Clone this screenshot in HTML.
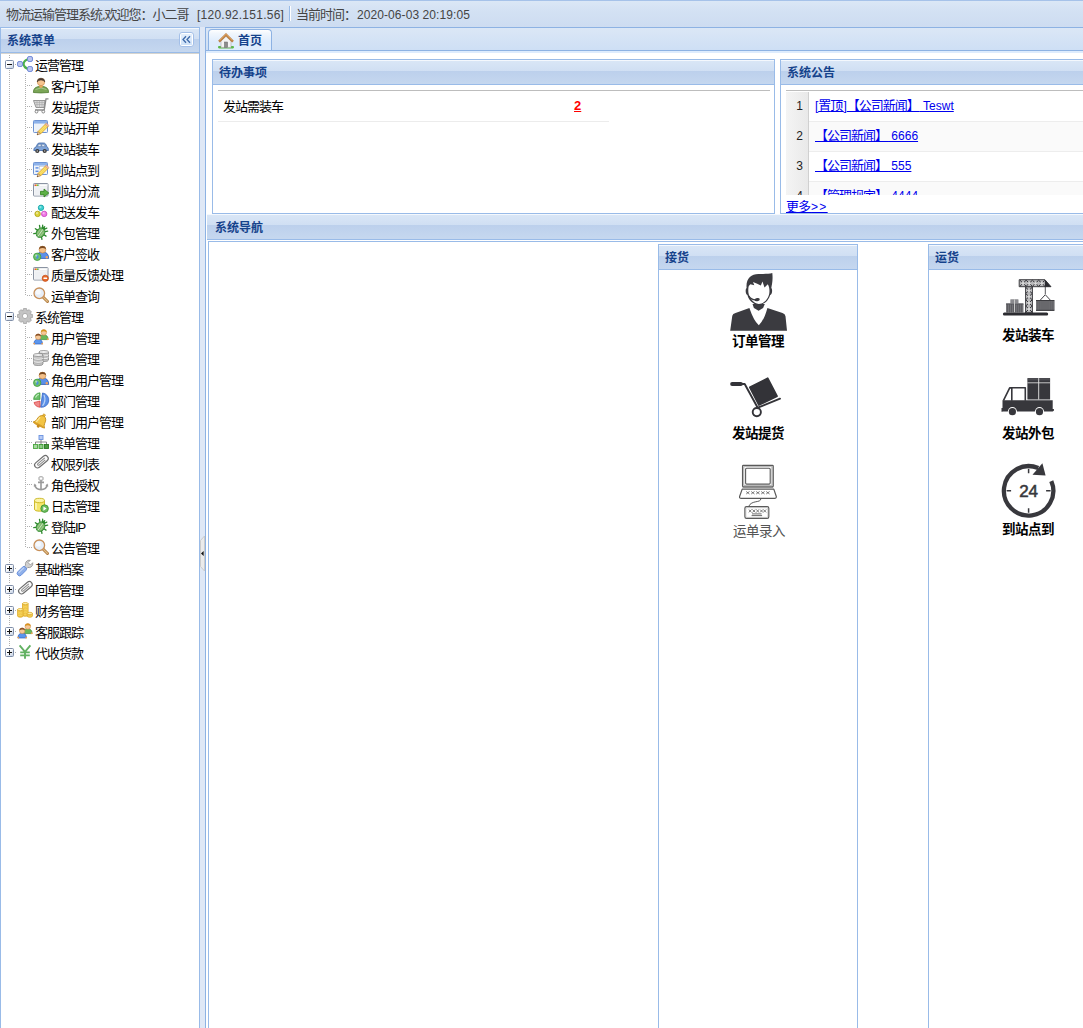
<!DOCTYPE html>
<html lang="zh-CN">
<head>
<meta charset="utf-8">
<title>物流运输管理系统</title>
<style>
*{box-sizing:border-box;margin:0;padding:0}
html,body{width:1083px;height:1028px;overflow:hidden;background:#dfe8f6;font-family:"Liberation Sans","Noto Sans CJK SC",sans-serif;font-size:12px;color:#000}
i{font-style:normal;display:block}
.abs{position:absolute}
.c{font-size:13px;letter-spacing:-1px}
.c0{font-size:13px}
#top{position:absolute;left:0;top:0;width:1083px;height:27px;background:linear-gradient(#dbe7f6 0,#d3e1f3 40%,#cddcf1 100%);border-top:1px solid #a6c2e9}
#top span{position:absolute;top:6px;white-space:nowrap;color:#444;line-height:15px}
.hd{position:absolute;border:1px solid #99bbe8;height:26px;background:linear-gradient(#f4f8fd 0,#f4f8fd 1px,#d9e6f6 1px,#d0dff3 11px,#bcd0ec 11px,#c5d7ef 24px);color:#15428b;font-weight:bold;font-size:12px;line-height:15px;padding:6px 0 0 6px;white-space:nowrap;overflow:hidden}
.bd{position:absolute;border:1px solid #99bbe8;border-top:0;background:#fff;overflow:hidden}
#tree{position:absolute;left:1px;top:53px;width:198px;height:975px;background:#fff;overflow:hidden}
.row{position:absolute;left:0;height:21px;width:198px;white-space:nowrap}
.row .t{position:absolute;top:4px;font-size:13px;letter-spacing:-1px;line-height:15px;color:#000}
.ic{position:absolute;width:16px;height:16px;top:2px;overflow:visible}
.pm{position:absolute;left:4px;top:6px;width:9px;height:9px;border:1px solid #7f8ea8;border-radius:1.5px;background:linear-gradient(135deg,#fff 35%,#c3cfe2)}
.pm:before{content:"";position:absolute;left:1px;top:3px;width:5px;height:1px;background:#111}
.pm.plus:after{content:"";position:absolute;left:3px;top:1px;width:1px;height:5px;background:#111}
.vl{position:absolute;width:1px;background-image:linear-gradient(#b0b0b0 50%,transparent 50%);background-size:1px 2px}
.hl{position:absolute;height:1px;background-image:linear-gradient(90deg,#b0b0b0 50%,transparent 50%);background-size:2px 1px}
#tool{position:absolute;left:179px;top:32px;width:15px;height:15px;border:1px solid #a3bfe8;border-radius:3px;background:#fff}
#tool i{position:absolute;left:1px;top:1px;width:11px;height:11px;background:linear-gradient(#e4effc,#cfe2f8)}
#tool svg{position:absolute;left:1px;top:1px;width:11px;height:11px}
a{color:#0000ee;text-decoration:underline}
.lbl{position:absolute;left:0;width:198px;text-align:center;font-family:"Liberation Sans","Noto Sans CJK SC",sans-serif;font-weight:bold;font-size:13.5px;letter-spacing:-0.5px;line-height:16px;color:#000;white-space:nowrap}
.big{position:absolute}
.grow{position:absolute;left:0;width:320px;height:30px;border-bottom:1px solid #ededed}
.grow b{position:absolute;left:0;top:0;width:23px;height:30px;background:linear-gradient(90deg,#f4f4f4,#e9e9e9);border-right:1px solid #d0d0d0;font-weight:normal;text-align:right;padding:7px 5px 0 0;line-height:15px;color:#222}
.grow a{position:absolute;left:29px;top:6px;line-height:15px;white-space:nowrap}
</style>
</head>
<body>
<div id="top">
<span class="c" style="left:6px">物流运输管理系统,欢迎您：小二哥</span>
<span style="left:197px;top:7px;letter-spacing:0.25px">[120.92.151.56]</span>
<i class="abs" style="left:289px;top:5px;width:1px;height:15px;background:#98bbe7"></i><i class="abs" style="left:290px;top:5px;width:1px;height:15px;background:#fff"></i>
<span class="c" style="left:296px">当前时间：</span>
<span style="left:357px;top:7px;letter-spacing:0.08px">2020-06-03 20:19:05</span>
</div>

<!-- left panel -->
<div class="hd" style="left:0;top:27px;width:200px">系统菜单</div>
<div id="tool"><i></i><svg viewBox="0 0 11 11"><path d="M5 2.2 L2 5.5 L5 8.8 M9 2.2 L6 5.5 L9 8.8" fill="none" stroke="#3e6aaa" stroke-width="1.3"/></svg></div>
<div class="abs" style="left:0;top:53px;width:1px;height:975px;background:#99bbe8"></div>
<div class="abs" style="left:199px;top:53px;width:1px;height:975px;background:#99bbe8"></div>
<div class="abs" style="left:1px;top:53px;width:198px;height:1px;background:#d6d4ce;z-index:2"></div>
<div id="tree">
<div class="row" style="top:1px"><i class="pm"></i><i class="hl" style="left:14px;top:10px;width:2px"></i><svg class="ic" style="left:16px" viewBox="0 0 16 16"><path d="M12 3 Q7 4 6.5 8 Q7 12 12 13" stroke="#4db04d" stroke-width="2.2" fill="none"/><path d="M3 8 H7" stroke="#4db04d" stroke-width="2"/><rect x="0.5" y="5.5" width="5" height="5" rx="1.6" fill="#b9c5ee" stroke="#7088d8"/><rect x="10.5" y="0.5" width="5" height="5" rx="1.6" fill="#b9c5ee" stroke="#7088d8"/><rect x="10.5" y="10.5" width="5" height="5" rx="1.6" fill="#b9c5ee" stroke="#7088d8"/></svg><span class="t" style="left:34px">运营管理</span></div>
<div class="row" style="top:22px"><i class="hl" style="left:26px;top:10px;width:6px"></i><svg class="ic" style="left:32px" viewBox="0 0 16 16"><path d="M0.4 15.5 Q0.2 9.4 8 9.3 Q15.8 9.4 15.6 15.5 Q8 16.4 0.4 15.5Z" fill="#7aa556" stroke="#4c7a2e" stroke-width="0.8"/><path d="M2.5 12.5 Q8 9.5 13.5 12.5" fill="none" stroke="#a8c890" stroke-width="1"/><path d="M6.3 8 H9.7 V10.2 Q8 11.4 6.3 10.2Z" fill="#e8a860"/><circle cx="8" cy="5" r="3.7" fill="#f6c592" stroke="#c8843c" stroke-width="0.6"/><path d="M4.2 5 A3.8 3.8 0 0 1 11.8 5 Q10.5 2.8 8 3 Q5.5 2.8 4.2 5Z" fill="#4a3a30" stroke="#4a3a30" stroke-width="0.6"/></svg><span class="t" style="left:50px">客户订单</span></div>
<div class="row" style="top:43px"><i class="hl" style="left:26px;top:10px;width:6px"></i><svg class="ic" style="left:32px" viewBox="0 0 16 16"><path d="M0.5 2.5 H12 L11 9.5 H3 Z" fill="#d9d9d9" stroke="#8c8c8c" stroke-width="0.9"/><path d="M2 4.5H11.5M2.5 6.5H11.3M4 2.5V9.5M6.5 2.5V9.5M9 2.5V9.5" stroke="#a8a8a8" stroke-width="0.6"/><path d="M15.5 0.8 H13 L11.2 12 H2" fill="none" stroke="#8a8a8a" stroke-width="1.3"/><circle cx="3.5" cy="13.6" r="1.4" fill="#fff" stroke="#7a7a7a" stroke-width="0.9"/><circle cx="10.3" cy="13.6" r="1.4" fill="#fff" stroke="#7a7a7a" stroke-width="0.9"/></svg><span class="t" style="left:50px">发站提货</span></div>
<div class="row" style="top:64px"><i class="hl" style="left:26px;top:10px;width:6px"></i><svg class="ic" style="left:32px" viewBox="0 0 16 16"><rect x="0.5" y="1.5" width="14" height="12" rx="0.8" fill="#f4f8fc" stroke="#6d93d3"/><rect x="1" y="2" width="13" height="2.6" fill="#8db2ea"/><rect x="1.5" y="5" width="12" height="8" fill="#e8eef6" opacity="0.6"/><g transform="translate(4.5,15.5) rotate(-45)"><rect x="2.5" y="-1.8" width="11" height="3.6" fill="#f7d44c" stroke="#d49a2a" stroke-width="0.6"/><path d="M4 -0.6H13M4 0.6H13" stroke="#fbe98a" stroke-width="0.6"/><rect x="12.5" y="-1.8" width="2" height="3.6" rx="0.8" fill="#f0b9a0" stroke="#c98a6a" stroke-width="0.5"/><path d="M2.5 -1.8 L-0.5 0 L2.5 1.8Z" fill="#e8c9a0" stroke="#a0703a" stroke-width="0.5"/><path d="M0.6 -0.7L-0.6 0L0.6 0.7Z" fill="#5a3a1a"/></g></svg><span class="t" style="left:50px">发站开单</span></div>
<div class="row" style="top:85px"><i class="hl" style="left:26px;top:10px;width:6px"></i><svg class="ic" style="left:32px" viewBox="0 0 16 16"><path d="M0.8 10.5 Q0.5 7.5 3 7 L4.5 4 Q5 3 6.5 3 H10.5 Q12 3 12.6 4 L14 6.8 Q15.6 7.4 15.4 10.5 Z" fill="#7ea3d8" stroke="#3f68a8" stroke-width="0.8"/><path d="M4.6 6.6 L5.6 4.3 H8 V6.6Z M8.8 4.3 H11 L12.2 6.6 H8.8Z" fill="#dbe8f7" stroke="#49628a" stroke-width="0.4"/><circle cx="4.3" cy="11" r="2.1" fill="#3a3a3a"/><circle cx="4.3" cy="11" r="0.8" fill="#bbb"/><circle cx="11.7" cy="11" r="2.1" fill="#3a3a3a"/><circle cx="11.7" cy="11" r="0.8" fill="#bbb"/></svg><span class="t" style="left:50px">发站装车</span></div>
<div class="row" style="top:106px"><i class="hl" style="left:26px;top:10px;width:6px"></i><svg class="ic" style="left:32px" viewBox="0 0 16 16"><rect x="0.5" y="1.5" width="14" height="12" rx="0.8" fill="#f4f8fc" stroke="#6d93d3"/><rect x="1" y="2" width="13" height="2.6" fill="#8db2ea"/><rect x="1.5" y="5" width="12" height="8" fill="#e8eef6" opacity="0.6"/><rect x="2.5" y="6.2" width="3" height="1.4" fill="#5b8be0"/><rect x="2.5" y="9.6" width="3" height="1.4" fill="#5b8be0"/><rect x="6.5" y="5.7" width="6.5" height="2.4" fill="#fff" stroke="#b0b8c4" stroke-width="0.5"/><g transform="translate(4.5,15.5) rotate(-45)"><rect x="2.5" y="-1.8" width="11" height="3.6" fill="#f7d44c" stroke="#d49a2a" stroke-width="0.6"/><path d="M4 -0.6H13M4 0.6H13" stroke="#fbe98a" stroke-width="0.6"/><rect x="12.5" y="-1.8" width="2" height="3.6" rx="0.8" fill="#f0b9a0" stroke="#c98a6a" stroke-width="0.5"/><path d="M2.5 -1.8 L-0.5 0 L2.5 1.8Z" fill="#e8c9a0" stroke="#a0703a" stroke-width="0.5"/><path d="M0.6 -0.7L-0.6 0L0.6 0.7Z" fill="#5a3a1a"/></g></svg><span class="t" style="left:50px">到站点到</span></div>
<div class="row" style="top:127px"><i class="hl" style="left:26px;top:10px;width:6px"></i><svg class="ic" style="left:32px" viewBox="0 0 16 16"><rect x="0.5" y="1.5" width="14.5" height="12.5" rx="0.8" fill="#fbfbfb" stroke="#8a93a2"/><rect x="1" y="2" width="13.5" height="2.6" fill="#e3e6ea"/><rect x="1.6" y="2.5" width="1.3" height="1.5" fill="#e0442e"/><rect x="2.9" y="2.5" width="1.3" height="1.5" fill="#f0b020"/><rect x="4.2" y="2.5" width="1.3" height="1.5" fill="#4cae3a"/><rect x="6.5" y="2.6" width="7.3" height="1.3" fill="#fff"/><rect x="1.5" y="5.2" width="12.5" height="8.2" fill="#eef0f3"/><path d="M7.5 9.3 H11 V7 L15.8 11 L11 15 V12.7 H7.5Z" fill="#5eb046" stroke="#2f7d1c" stroke-width="0.8" stroke-linejoin="round"/></svg><span class="t" style="left:50px">到站分流</span></div>
<div class="row" style="top:148px"><i class="hl" style="left:26px;top:10px;width:6px"></i><svg class="ic" style="left:32px" viewBox="0 0 16 16"><circle cx="8" cy="4.8" r="2.7" fill="#3fd0d0" stroke="#1aa6a8" stroke-width="0.9"/><circle cx="7.4" cy="4.1" r="1.1" fill="#fff" opacity="0.45"/><circle cx="4.6" cy="10.9" r="2.7" fill="#dcd33a" stroke="#b0a61a" stroke-width="0.9"/><circle cx="3.9999999999999996" cy="10.200000000000001" r="1.1" fill="#fff" opacity="0.45"/><circle cx="11.2" cy="10.9" r="2.7" fill="#f07ae6" stroke="#cc48c2" stroke-width="0.9"/><circle cx="10.6" cy="10.200000000000001" r="1.1" fill="#fff" opacity="0.45"/></svg><span class="t" style="left:50px">配送发车</span></div>
<div class="row" style="top:169px"><i class="hl" style="left:26px;top:10px;width:6px"></i><svg class="ic" style="left:32px" viewBox="0 0 16 16"><g transform="rotate(35 8 8)"><path d="M8 1.5V4M3 3.5L5.5 6M13 3.5L10.5 6M1.5 8.5H4.5M14.5 8.5H11.5M3 13.5L5.5 11M13 13.5L10.5 11M5.5 1.5L6.8 3.8M10.5 1.5L9.2 3.8" stroke="#2e8a2e" stroke-width="1.3" stroke-linecap="round"/><ellipse cx="8" cy="8.8" rx="4" ry="5" fill="#7cb86a" stroke="#2e8a2e" stroke-width="1"/><ellipse cx="8" cy="3.6" rx="2" ry="1.5" fill="#2e8a2e"/><path d="M8 4.6V13.6" stroke="#d8ecd0" stroke-width="0.8"/><path d="M6 6.5V11.5M10 6.5V11.5" stroke="#a8d09a" stroke-width="0.7"/></g></svg><span class="t" style="left:50px">外包管理</span></div>
<div class="row" style="top:190px"><i class="hl" style="left:26px;top:10px;width:6px"></i><svg class="ic" style="left:32px" viewBox="0 0 16 16"><path d="M3.3 13.44 Q3.3 6.9799999999999995 9.5 6.9799999999999995 Q15.7 6.9799999999999995 15.7 13.44 Z" fill="#5b8fe8" stroke="#2e5cb8" stroke-width="0.8"/><circle cx="9.5" cy="4.6" r="3.4" fill="#f3c08a" stroke="#c8843c" stroke-width="0.6"/><path d="M6.1 4.3 A3.4 3.4 0 0 1 12.9 4.3 Q9.5 1.5399999999999996 6.1 4.3Z" fill="#7a4a22"/><circle cx="13.8" cy="12.2" r="1.2" fill="#f3a25a"/><circle cx="4.2" cy="11.8" r="3.7" fill="#6fc06a" stroke="#3c9a3c" stroke-width="0.8"/><path d="M3 9.5 Q6 10 5.5 12.5 Q4.5 14.5 3 13.5 Q4 12 3 9.5Z" fill="#4a8ee0"/><circle cx="3.2" cy="10.6" r="1.1" fill="#cfeccc" opacity="0.7"/></svg><span class="t" style="left:50px">客户签收</span></div>
<div class="row" style="top:211px"><i class="hl" style="left:26px;top:10px;width:6px"></i><svg class="ic" style="left:32px" viewBox="0 0 16 16"><rect x="0.5" y="1.5" width="14.5" height="12.5" rx="0.8" fill="#fbfbfb" stroke="#8a93a2"/><rect x="1" y="2" width="13.5" height="2.6" fill="#e3e6ea"/><rect x="1.6" y="2.5" width="1.3" height="1.5" fill="#e0442e"/><rect x="2.9" y="2.5" width="1.3" height="1.5" fill="#f0b020"/><rect x="4.2" y="2.5" width="1.3" height="1.5" fill="#4cae3a"/><rect x="6.5" y="2.6" width="7.3" height="1.3" fill="#fff"/><rect x="1.5" y="5.2" width="12.5" height="8.2" fill="#eef0f3"/><circle cx="12.3" cy="12.3" r="3.1" fill="#e8692a" stroke="#c24a12" stroke-width="0.7"/><rect x="10.4" y="11.6" width="3.8" height="1.4" rx="0.4" fill="#fff"/></svg><span class="t" style="left:50px">质量反馈处理</span></div>
<div class="row" style="top:232px"><i class="hl" style="left:26px;top:10px;width:6px"></i><svg class="ic" style="left:32px" viewBox="0 0 16 16"><path d="M10 10 L14.5 14.5" stroke="#b07a3e" stroke-width="3" stroke-linecap="round"/><path d="M10.4 10.4 L14.3 14.3" stroke="#e3c08a" stroke-width="1.3" stroke-linecap="round"/><circle cx="6.3" cy="6.3" r="5.3" fill="#e6eef9" stroke="#c8905a" stroke-width="1.3"/><circle cx="5.3" cy="5" r="2.6" fill="#fff" opacity="0.7"/></svg><span class="t" style="left:50px">运单查询</span></div>
<i class="vl" style="left:24px;top:21px;height:222px"></i>
<div class="row" style="top:253px"><i class="pm"></i><i class="hl" style="left:14px;top:10px;width:2px"></i><svg class="ic" style="left:16px" viewBox="0 0 16 16"><path d="M6.49 0.55 L9.51 0.55 L10.13 2.82 L10.16 2.83 L12.20 1.67 L14.33 3.80 L13.17 5.84 L13.18 5.87 L15.45 6.49 L15.45 9.51 L13.18 10.13 L13.17 10.16 L14.33 12.20 L12.20 14.33 L10.16 13.17 L10.13 13.18 L9.51 15.45 L6.49 15.45 L5.87 13.18 L5.84 13.17 L3.80 14.33 L1.67 12.20 L2.83 10.16 L2.82 10.13 L0.55 9.51 L0.55 6.49 L2.82 5.87 L2.83 5.84 L1.67 3.80 L3.80 1.67 L5.84 2.83 L5.87 2.82Z" fill="#c4c4c4" stroke="#9a9a9a" stroke-width="0.7" stroke-linejoin="round"/><circle cx="8" cy="8" r="2.6" fill="#fff" stroke="#a0a0a0" stroke-width="0.8"/></svg><span class="t" style="left:34px">系统管理</span></div>
<div class="row" style="top:274px"><i class="hl" style="left:26px;top:10px;width:6px"></i><svg class="ic" style="left:32px" viewBox="0 0 16 16"><path d="M6.6000000000000005 10.6 Q6.4 6.0 10.8 5.8 Q15.200000000000001 6.0 15.0 10.6Z" fill="#6ab85a" stroke="#3c8a34" stroke-width="0.7"/><circle cx="6.800000000000001" cy="10.2" r="0.9" fill="#f0a050"/><circle cx="14.8" cy="10.2" r="0.9" fill="#f0a050"/><circle cx="10.8" cy="3.4" r="2.8" fill="#f6c898" stroke="#c8843c" stroke-width="0.5"/><path d="M8.0 3.1999999999999997 A2.8 2.8 0 0 1 13.600000000000001 3.1999999999999997 Q10.8 1.1999999999999997 8.0 3.1999999999999997Z" fill="#d8941e"/><path d="M1.0 15.0 Q0.7999999999999998 10.4 5.2 10.2 Q9.600000000000001 10.4 9.4 15.0Z" fill="#5b96ee" stroke="#2e62c0" stroke-width="0.7"/><circle cx="1.2000000000000002" cy="14.6" r="0.9" fill="#f0a050"/><circle cx="9.2" cy="14.6" r="0.9" fill="#f0a050"/><circle cx="5.2" cy="7.8" r="2.8" fill="#f6c898" stroke="#c8843c" stroke-width="0.5"/><path d="M2.4000000000000004 7.6 A2.8 2.8 0 0 1 8.0 7.6 Q5.2 5.6 2.4000000000000004 7.6Z" fill="#8a5228"/></svg><span class="t" style="left:50px">用户管理</span></div>
<div class="row" style="top:295px"><i class="hl" style="left:26px;top:10px;width:6px"></i><svg class="ic" style="left:32px" viewBox="0 0 16 16"><path d="M6 2.0 V10.0 A4.75 1.5 0 0 0 15.5 10.0 V2.0Z" fill="#c8c8c8" stroke="#7c7c7c" stroke-width="0.7"/><path d="M6 4.666666666666666 A4.75 1.5 0 0 0 15.5 4.666666666666666" fill="none" stroke="#fff" stroke-width="0.9"/><path d="M6 5.366666666666666 A4.75 1.5 0 0 0 15.5 5.366666666666666" fill="none" stroke="#888" stroke-width="0.5"/><path d="M6 7.333333333333333 A4.75 1.5 0 0 0 15.5 7.333333333333333" fill="none" stroke="#fff" stroke-width="0.9"/><path d="M6 8.033333333333333 A4.75 1.5 0 0 0 15.5 8.033333333333333" fill="none" stroke="#888" stroke-width="0.5"/><ellipse cx="10.75" cy="2.0" rx="4.75" ry="1.5" fill="#f0f0f0" stroke="#7c7c7c" stroke-width="0.7"/><path d="M0.5 5.0 V14.0 A4.75 1.5 0 0 0 10.0 14.0 V5.0Z" fill="#c8c8c8" stroke="#7c7c7c" stroke-width="0.7"/><path d="M0.5 8.0 A4.75 1.5 0 0 0 10.0 8.0" fill="none" stroke="#fff" stroke-width="0.9"/><path d="M0.5 8.7 A4.75 1.5 0 0 0 10.0 8.7" fill="none" stroke="#888" stroke-width="0.5"/><path d="M0.5 11.0 A4.75 1.5 0 0 0 10.0 11.0" fill="none" stroke="#fff" stroke-width="0.9"/><path d="M0.5 11.7 A4.75 1.5 0 0 0 10.0 11.7" fill="none" stroke="#888" stroke-width="0.5"/><ellipse cx="5.25" cy="5.0" rx="4.75" ry="1.5" fill="#f0f0f0" stroke="#7c7c7c" stroke-width="0.7"/></svg><span class="t" style="left:50px">角色管理</span></div>
<div class="row" style="top:316px"><i class="hl" style="left:26px;top:10px;width:6px"></i><svg class="ic" style="left:32px" viewBox="0 0 16 16"><path d="M3.3 13.44 Q3.3 6.9799999999999995 9.5 6.9799999999999995 Q15.7 6.9799999999999995 15.7 13.44 Z" fill="#5b8fe8" stroke="#2e5cb8" stroke-width="0.8"/><circle cx="9.5" cy="4.6" r="3.4" fill="#f3c08a" stroke="#c8843c" stroke-width="0.6"/><path d="M6.1 4.3 A3.4 3.4 0 0 1 12.9 4.3 Q9.5 1.5399999999999996 6.1 4.3Z" fill="#7a4a22"/><circle cx="13.8" cy="12.2" r="1.2" fill="#f3a25a"/><circle cx="4.2" cy="11.8" r="3.7" fill="#6fc06a" stroke="#3c9a3c" stroke-width="0.8"/><path d="M3 9.5 Q6 10 5.5 12.5 Q4.5 14.5 3 13.5 Q4 12 3 9.5Z" fill="#4a8ee0"/><circle cx="3.2" cy="10.6" r="1.1" fill="#cfeccc" opacity="0.7"/></svg><span class="t" style="left:50px">角色用户管理</span></div>
<div class="row" style="top:337px"><i class="hl" style="left:26px;top:10px;width:6px"></i><svg class="ic" style="left:32px" viewBox="0 0 16 16"><path d="M8.6 8 L8.6 0.8 A7.2 7.2 0 0 1 8.6 15.2Z" transform="rotate(8 8 8)" fill="#5b8fe6" stroke="#2e5fc0" stroke-width="0.7"/><path d="M10.3 2.5 Q13.5 8 10.3 13.5" transform="rotate(8 8 8)" fill="none" stroke="#b8d0f6" stroke-width="1.2"/><path d="M7 7.4 L0.6 7.4 A6.6 6.6 0 0 1 7 0.8Z" fill="#6cc06a" stroke="#3a9a3a" stroke-width="0.7"/><path d="M2.5 5.5 Q3.5 2.8 6 2.2" fill="none" stroke="#c8ecc4" stroke-width="1.1"/><path d="M7 9 L7 15.2 A6.6 6.6 0 0 1 1 10.5Z" fill="#f08a8a" stroke="#d83a3a" stroke-width="0.7"/></svg><span class="t" style="left:50px">部门管理</span></div>
<div class="row" style="top:358px"><i class="hl" style="left:26px;top:10px;width:6px"></i><svg class="ic" style="left:32px" viewBox="0 0 16 16"><g transform="rotate(28 8 8)"><circle cx="8" cy="1.6" r="1.3" fill="#f0c040" stroke="#c08a1a" stroke-width="0.6"/><path d="M8 2.2 Q3.6 3 3.6 8.5 Q3.4 11 1.6 12.6 H14.4 Q12.6 11 12.4 8.5 Q12.4 3 8 2.2Z" fill="#f3c444" stroke="#c08a1a" stroke-width="0.8"/><path d="M5.4 5 Q5 8 4.2 11" stroke="#fbe7a0" stroke-width="1.2" fill="none"/><ellipse cx="8" cy="12.6" rx="6.4" ry="1.2" fill="#d9a02a"/><circle cx="8" cy="13.8" r="1.5" fill="#c88a1a"/></g></svg><span class="t" style="left:50px">部门用户管理</span></div>
<div class="row" style="top:379px"><i class="hl" style="left:26px;top:10px;width:6px"></i><svg class="ic" style="left:32px" viewBox="0 0 16 16"><path d="M8 5.5V8M2.5 10.5V8H13.5V10.5M8 8V10.5" fill="none" stroke="#7a7a7a" stroke-width="0.9"/><rect x="6" y="1.5" width="4" height="4" fill="#b8ccf4" stroke="#6a92e0" stroke-width="0.9"/><rect x="0.5" y="10.5" width="4" height="4" fill="#a8d8a0" stroke="#4aa83e" stroke-width="0.9"/><rect x="6" y="10.5" width="4" height="4" fill="#8ccc84" stroke="#3c9a30" stroke-width="0.9"/><rect x="11.5" y="10.5" width="4" height="4" fill="#4a9a40" stroke="#2a7a22" stroke-width="0.9"/></svg><span class="t" style="left:50px">菜单管理</span></div>
<div class="row" style="top:400px"><i class="hl" style="left:26px;top:10px;width:6px"></i><svg class="ic" style="left:32px" viewBox="0 0 16 16"><g transform="rotate(-40 8.4 6.8)"><rect x="0.4" y="3.9" width="16" height="5.8" rx="2.9" fill="#fafafa" stroke="#6e6e6e" stroke-width="1.15"/><path d="M13.6 5.9 H4.6 A0.95 0.95 0 0 0 4.6 7.8 H12.6" fill="none" stroke="#8a8a8a" stroke-width="1"/></g></svg><span class="t" style="left:50px">权限列表</span></div>
<div class="row" style="top:421px"><i class="hl" style="left:26px;top:10px;width:6px"></i><svg class="ic" style="left:32px" viewBox="0 0 16 16"><rect x="6" y="0.8" width="4" height="3.4" rx="0.8" fill="#fff" stroke="#9a9a9a" stroke-width="1"/><path d="M8 4.2V13.5M5 6.4H11" stroke="#9a9a9a" stroke-width="1.6"/><path d="M1.5 8.6 Q2.6 13.4 8 13.6 Q13.4 13.4 14.5 8.6" fill="none" stroke="#9a9a9a" stroke-width="1.7"/><path d="M0.6 10.4L1.6 7.6L3.6 9.8ZM15.4 10.4L14.4 7.6L12.4 9.8Z" fill="#9a9a9a"/></svg><span class="t" style="left:50px">角色授权</span></div>
<div class="row" style="top:442px"><i class="hl" style="left:26px;top:10px;width:6px"></i><svg class="ic" style="left:32px" viewBox="0 0 16 16"><path d="M1.5 3.5 V12 A5 2.2 0 0 0 11.5 12 V3.5Z" fill="#f4e66a" stroke="#c8b41e" stroke-width="0.9"/><ellipse cx="6.5" cy="3.5" rx="5" ry="2.2" fill="#fbf4a8" stroke="#c8b41e" stroke-width="0.9"/><path d="M3 6 V12.5" stroke="#fdf8c8" stroke-width="1.4"/><circle cx="11.6" cy="11.6" r="3.8" fill="#6cbc5c" stroke="#3a8f30" stroke-width="0.8"/><path d="M10.4 9.4 L13.6 11.6 L10.4 13.8Z" fill="#fff"/></svg><span class="t" style="left:50px">日志管理</span></div>
<div class="row" style="top:463px"><i class="hl" style="left:26px;top:10px;width:6px"></i><svg class="ic" style="left:32px" viewBox="0 0 16 16"><g transform="rotate(35 8 8)"><path d="M8 1.5V4M3 3.5L5.5 6M13 3.5L10.5 6M1.5 8.5H4.5M14.5 8.5H11.5M3 13.5L5.5 11M13 13.5L10.5 11M5.5 1.5L6.8 3.8M10.5 1.5L9.2 3.8" stroke="#2e8a2e" stroke-width="1.3" stroke-linecap="round"/><ellipse cx="8" cy="8.8" rx="4" ry="5" fill="#7cb86a" stroke="#2e8a2e" stroke-width="1"/><ellipse cx="8" cy="3.6" rx="2" ry="1.5" fill="#2e8a2e"/><path d="M8 4.6V13.6" stroke="#d8ecd0" stroke-width="0.8"/><path d="M6 6.5V11.5M10 6.5V11.5" stroke="#a8d09a" stroke-width="0.7"/></g></svg><span class="t" style="left:50px">登陆IP</span></div>
<div class="row" style="top:484px"><i class="hl" style="left:26px;top:10px;width:6px"></i><svg class="ic" style="left:32px" viewBox="0 0 16 16"><path d="M10 10 L14.5 14.5" stroke="#b07a3e" stroke-width="3" stroke-linecap="round"/><path d="M10.4 10.4 L14.3 14.3" stroke="#e3c08a" stroke-width="1.3" stroke-linecap="round"/><circle cx="6.3" cy="6.3" r="5.3" fill="#e6eef9" stroke="#c8905a" stroke-width="1.3"/><circle cx="5.3" cy="5" r="2.6" fill="#fff" opacity="0.7"/></svg><span class="t" style="left:50px">公告管理</span></div>
<i class="vl" style="left:24px;top:273px;height:222px"></i>
<div class="row" style="top:505px"><i class="pm plus"></i><i class="hl" style="left:14px;top:10px;width:2px"></i><svg class="ic" style="left:16px" viewBox="0 0 16 16"><g transform="rotate(45 8 8)"><path d="M6.3 -1.2 V2 H9.7 V-1.2 Q12 0 11.6 3 Q11 5 9.6 5.6 V7.5 H6.4 V5.6 Q5 5 4.4 3 Q4 0 6.3 -1.2Z" fill="#d0d0d0" stroke="#8a8a8a" stroke-width="0.7"/><rect x="5.6" y="7" width="4.8" height="11" rx="2.2" fill="#8fb0ea" stroke="#5a84d8" stroke-width="0.8"/><path d="M7 8.5V16" stroke="#c4d6f6" stroke-width="1.1"/></g></svg><span class="t" style="left:34px">基础档案</span></div>
<div class="row" style="top:526px"><i class="pm plus"></i><i class="hl" style="left:14px;top:10px;width:2px"></i><svg class="ic" style="left:16px" viewBox="0 0 16 16"><g transform="rotate(-40 8.4 6.8)"><rect x="0.4" y="3.9" width="16" height="5.8" rx="2.9" fill="#fafafa" stroke="#6e6e6e" stroke-width="1.15"/><path d="M13.6 5.9 H4.6 A0.95 0.95 0 0 0 4.6 7.8 H12.6" fill="none" stroke="#8a8a8a" stroke-width="1"/></g></svg><span class="t" style="left:34px">回单管理</span></div>
<div class="row" style="top:547px"><i class="pm plus"></i><i class="hl" style="left:14px;top:10px;width:2px"></i><svg class="ic" style="left:16px" viewBox="0 0 16 16"><path d="M5.5 1.6 V13.1 A2.8 1.2 0 0 0 11.1 13.1 V1.6Z" fill="#f9da62" stroke="#dba520" stroke-width="0.8"/><path d="M6.1 3.2 A2.8 1 0 0 0 10.5 3.2" fill="none" stroke="#e0a82a" stroke-width="0.5"/><path d="M6.1 4.800000000000001 A2.8 1 0 0 0 10.5 4.800000000000001" fill="none" stroke="#e0a82a" stroke-width="0.5"/><path d="M6.1 6.4 A2.8 1 0 0 0 10.5 6.4" fill="none" stroke="#e0a82a" stroke-width="0.5"/><path d="M6.1 8.0 A2.8 1 0 0 0 10.5 8.0" fill="none" stroke="#e0a82a" stroke-width="0.5"/><path d="M6.1 9.6 A2.8 1 0 0 0 10.5 9.6" fill="none" stroke="#e0a82a" stroke-width="0.5"/><path d="M6.1 11.2 A2.8 1 0 0 0 10.5 11.2" fill="none" stroke="#e0a82a" stroke-width="0.5"/><path d="M6.1 12.799999999999999 A2.8 1 0 0 0 10.5 12.799999999999999" fill="none" stroke="#e0a82a" stroke-width="0.5"/><ellipse cx="8.3" cy="1.6" rx="2.8" ry="1.1" fill="#fdf1b0" stroke="#dba520" stroke-width="0.7"/><path d="M0.6 7.6 V14.0 A2.7 1.2 0 0 0 6.0 14.0 V7.6Z" fill="#f9da62" stroke="#dba520" stroke-width="0.8"/><path d="M1.2 9.2 A2.7 1 0 0 0 5.4 9.2" fill="none" stroke="#e0a82a" stroke-width="0.5"/><path d="M1.2 10.799999999999999 A2.7 1 0 0 0 5.4 10.799999999999999" fill="none" stroke="#e0a82a" stroke-width="0.5"/><path d="M1.2 12.399999999999999 A2.7 1 0 0 0 5.4 12.399999999999999" fill="none" stroke="#e0a82a" stroke-width="0.5"/><path d="M1.2 13.999999999999998 A2.7 1 0 0 0 5.4 13.999999999999998" fill="none" stroke="#e0a82a" stroke-width="0.5"/><ellipse cx="3.3000000000000003" cy="7.6" rx="2.7" ry="1.1" fill="#fdf1b0" stroke="#dba520" stroke-width="0.7"/><path d="M10.2 11.4 V14.0 A2.6 1.2 0 0 0 15.399999999999999 14.0 V11.4Z" fill="#f9da62" stroke="#dba520" stroke-width="0.8"/><path d="M10.799999999999999 13.0 A2.6 1 0 0 0 14.799999999999999 13.0" fill="none" stroke="#e0a82a" stroke-width="0.5"/><ellipse cx="12.799999999999999" cy="11.4" rx="2.6" ry="1.1" fill="#fdf1b0" stroke="#dba520" stroke-width="0.7"/></svg><span class="t" style="left:34px">财务管理</span></div>
<div class="row" style="top:568px"><i class="pm plus"></i><i class="hl" style="left:14px;top:10px;width:2px"></i><svg class="ic" style="left:16px" viewBox="0 0 16 16"><path d="M6.6000000000000005 10.6 Q6.4 6.0 10.8 5.8 Q15.200000000000001 6.0 15.0 10.6Z" fill="#6ab85a" stroke="#3c8a34" stroke-width="0.7"/><circle cx="6.800000000000001" cy="10.2" r="0.9" fill="#f0a050"/><circle cx="14.8" cy="10.2" r="0.9" fill="#f0a050"/><circle cx="10.8" cy="3.4" r="2.8" fill="#f6c898" stroke="#c8843c" stroke-width="0.5"/><path d="M8.0 3.1999999999999997 A2.8 2.8 0 0 1 13.600000000000001 3.1999999999999997 Q10.8 1.1999999999999997 8.0 3.1999999999999997Z" fill="#d8941e"/><path d="M1.0 15.0 Q0.7999999999999998 10.4 5.2 10.2 Q9.600000000000001 10.4 9.4 15.0Z" fill="#5b96ee" stroke="#2e62c0" stroke-width="0.7"/><circle cx="1.2000000000000002" cy="14.6" r="0.9" fill="#f0a050"/><circle cx="9.2" cy="14.6" r="0.9" fill="#f0a050"/><circle cx="5.2" cy="7.8" r="2.8" fill="#f6c898" stroke="#c8843c" stroke-width="0.5"/><path d="M2.4000000000000004 7.6 A2.8 2.8 0 0 1 8.0 7.6 Q5.2 5.6 2.4000000000000004 7.6Z" fill="#8a5228"/></svg><span class="t" style="left:34px">客服跟踪</span></div>
<div class="row" style="top:589px"><i class="pm plus"></i><i class="hl" style="left:14px;top:10px;width:2px"></i><svg class="ic" style="left:16px" viewBox="0 0 16 16"><path d="M2.6 1.4 L8 7.8 L13.4 1.4 M8 7.8 V14.8 M3.2 8.4 H12.8 M3.2 11.4 H12.8" fill="none" stroke="#62b162" stroke-width="1.9"/></svg><span class="t" style="left:34px">代收货款</span></div>
<i class="vl" style="left:8px;top:17px;height:241px"></i>
<i class="vl" style="left:8px;top:269px;height:241px"></i>
<i class="vl" style="left:8px;top:521px;height:10px"></i>
<i class="vl" style="left:8px;top:542px;height:10px"></i>
<i class="vl" style="left:8px;top:563px;height:10px"></i>
<i class="vl" style="left:8px;top:584px;height:10px"></i>
<i class="vl" style="left:8px;top:0px;height:6px"></i>
</div>
<!-- splitter mini -->
<svg class="abs" style="left:200px;top:535px;width:5px;height:37px" viewBox="0 0 5 37"><path d="M0.5 5.5 L4.5 1 V36 L0.5 31.5Z" fill="#ebebeb" stroke="#c4c4c4" stroke-width="0.8"/><path d="M1 18.5 L3.6 16 V21Z" fill="#111"/></svg>

<!-- center tab panel -->
<div class="abs" style="left:205px;top:27px;width:900px;height:24px;border:1px solid #8db2e3;background:linear-gradient(#dbe7f6,#cedff5)"></div>
<div class="abs" style="left:205px;top:51px;width:900px;height:2px;border-left:1px solid #8db2e3;background:#deecfd"></div>
<div class="abs" style="left:205px;top:53px;width:900px;height:980px;border-left:1px solid #8db2e3;background:#fff"></div>
<div class="abs" style="left:208px;top:29px;width:64px;height:21px;border:1px solid #8db2e3;border-bottom:0;border-radius:4px 4px 0 0;background:linear-gradient(#fff 0,#f2f7fd 3px,#deecfd 12px,#deecfd)">
<svg class="ic" style="left:9px;top:3px" viewBox="0 0 16 16"><rect x="0" y="13" width="16" height="2.4" rx="1.1" fill="#5cb84a"/><path d="M3 8 V14.4 H13 V8 L8 3.4Z" fill="#f4f4f4" stroke="#a8a8a8" stroke-width="0.6"/><rect x="6.4" y="9" width="3.2" height="5.4" fill="#8c8c8c" stroke="#6a6a6a" stroke-width="0.5"/><path d="M1 8.6 L8 1.6 L15 8.6" fill="none" stroke="#b8783a" stroke-width="2.3" stroke-linejoin="miter"/><path d="M1.6 7.6 L8 1.3 L14.4 7.6" fill="none" stroke="#e8b070" stroke-width="0.9"/></svg>
<span class="abs" style="left:29px;top:4px;font-weight:bold;font-size:12px;line-height:15px;color:#15428b;white-space:nowrap">首页</span>
</div>

<!-- todo panel -->
<div class="hd" style="left:212px;top:59px;width:563px">待办事项</div>
<div class="bd" style="left:212px;top:85px;width:563px;height:129px">
 <i class="abs" style="left:5px;top:5px;width:552px;height:1px;background:#bdbdbd"></i>
 <span class="abs c" style="left:10px;top:14px;line-height:15px">发站需装车</span>
 <a class="abs" style="left:361px;top:13px;line-height:15px;color:#f00;font-weight:bold;font-size:13px">2</a>
 <i class="abs" style="left:5px;top:36px;width:391px;height:1px;background:#ececec"></i>
</div>

<!-- notice panel -->
<div class="hd" style="left:780px;top:59px;width:400px">系统公告</div>
<div class="bd" style="left:780px;top:85px;width:400px;height:129px">
 <i class="abs" style="left:5px;top:5px;width:400px;height:1px;background:#bdbdbd"></i>
 <div class="abs" style="left:5px;top:7px;width:400px;height:103px;overflow:hidden">
  <div class="grow" style="top:0"><b>1</b><a>[<span class="c">置</span><span class="c0">顶</span>]<span class="c">【公司新闻</span><span class="c0">】</span> Teswt</a></div>
  <div class="grow" style="top:30px;background:#fafafa"><b>2</b><a><span class="c">【公司新闻</span><span class="c0">】</span> 6666</a></div>
  <div class="grow" style="top:60px"><b>3</b><a><span class="c">【公司新闻</span><span class="c0">】</span> 555</a></div>
  <div class="grow" style="top:90px;background:#fafafa"><b>4</b><a><span class="c">【管理规定</span><span class="c0">】</span> 4444</a></div>
 </div>
 <a class="abs" style="left:5px;top:114px;line-height:15px"><span class="c">更</span><span class="c0">多</span><span style="letter-spacing:1.3px">&gt;&gt;</span></a>
</div>

<!-- nav -->
<div class="hd" style="left:207px;top:214px;width:900px;border-width:0 0 1px 0;padding-left:8px;padding-top:7px">系统导航</div>
<div class="abs" style="left:208px;top:241px;width:900px;height:800px;border:1px solid #99bbe8;background:#fff"></div>

<div class="hd" style="left:658px;top:244px;width:200px">接货</div>
<div class="bd" style="left:658px;top:270px;width:200px;height:800px">
 <div class="big" style="left:71px;top:3px;width:58px;height:59px"><svg width="58" height="59" viewBox="0 0 58 59"><path d="M0.2 57.7 L2.3 42.8 Q2.7 40.9 5.5 40.1 L19.4 34.9 Q23.5 47.3 28.8 52.2 Q34.1 47.3 37.4 34.9 L52.5 40.1 Q55.2 40.9 55.5 43.2 L57.0 57.7 Z" fill="#3b3b40"/><path d="M22.5 30.9 L23.9 34.9 L28.6 37.8 L33.1 34.9 L34.8 30.9 Z" fill="#3b3b40"/><path d="M28.8 31.9 C22.7 31.9 18.2 26.0 17.4 22.0 C15.3 21.6 15.2 15.8 16.6 15.0 C15.7 5.6 21.0 0.9 28.4 0.9 C34.1 0.9 39.0 1.1 42.3 0.1 C43.1 7.3 41.9 11.3 41.3 15.0 C42.7 16.2 42.3 21.6 40.2 22.1 C39.0 26.5 34.9 31.9 28.8 31.9 Z" fill="#3b3b40"/><path d="M28.8 30.9 C23.5 30.9 19.0 24.4 18.4 19.5 C18.2 17.1 18.2 14.6 18.8 13.1 L20.4 11.3 L24.3 12.3 L23.0 8.9 L27.2 10.7 L30.8 12.6 L32.5 8.5 L34.5 14.6 L37.8 11.3 C39.4 13.8 39.7 17.1 39.3 20.3 C38.6 25.2 34.5 30.9 28.8 30.9 Z" fill="#fff"/><path d="M18.8 23.2 Q21.0 26.9 25.9 27.0" fill="none" stroke="#3b3b40" stroke-width="1.4"/><ellipse cx="27.2" cy="26.7" rx="2.6" ry="1.6" fill="#3b3b40" transform="rotate(-8 27.2 26.7)"/></svg></div>
 <div class="lbl" style="top:64px">订单管理</div>
 <div class="big" style="left:71px;top:106px;width:56px;height:44px"><svg width="56" height="44" viewBox="0 0 56 44">
<path d="M2.1 8.0 L10.9 8.0" stroke="#333338" stroke-width="3.9" stroke-linecap="round"/>
<path d="M10.5 8.0 L14.7 8.0 L27.7 31.7 L50.0 22.7" fill="none" stroke="#333338" stroke-width="1.9" stroke-linejoin="round" stroke-linecap="round"/>
<path d="M19.8 11.3 L37.7 2.2 L47.1 20.2 L28.9 29.1 Z" fill="#333338" stroke="#333338" stroke-width="1.6" stroke-linejoin="round"/>
<circle cx="26.8" cy="36.1" r="4.1" fill="#fff" stroke="#333338" stroke-width="1.9"/>
</svg></div>
 <div class="lbl" style="top:156px">发站提货</div>
 <div class="big" style="left:79px;top:194px;width:42px;height:56px"><svg width="42" height="56" viewBox="0 0 42 56">
<rect x="4.6" y="1.4" width="30.6" height="21.5" rx="0.8" fill="#fff" stroke="#5a5a5a" stroke-width="1.3"/>
<rect x="5.9" y="2.7" width="28.0" height="18.900000000000002" fill="none" stroke="#9a9a9a" stroke-width="0.7"/>
<rect x="7.6" y="4.2" width="24.6" height="15.900000000000002" rx="1" fill="#fff" stroke="#5a5a5a" stroke-width="1.1"/>
<path d="M4.2 25.1 L35.8 25.1 L38.3 32.5 Q38.5 34.3 36.6 34.3 L3.2 34.3 Q1.2 34.3 1.6 32.5 Z" fill="#fff" stroke="#5a5a5a" stroke-width="1.2" stroke-linejoin="round"/>
<path d="M4.6 23.4 H35.2" stroke="#8a8a8a" stroke-width="0.9"/>
<path d="M8.2 27.5 L11.5 30.0 M11.5 27.5 L8.2 30.0" stroke="#5a5a5a" stroke-width="0.8"/><path d="M13.2 27.5 L16.5 30.0 M16.5 27.5 L13.2 30.0" stroke="#5a5a5a" stroke-width="0.8"/><path d="M18.2 27.5 L21.6 30.0 M21.6 27.5 L18.2 30.0" stroke="#5a5a5a" stroke-width="0.8"/><path d="M23.2 27.5 L26.6 30.0 M26.6 27.5 L23.2 30.0" stroke="#5a5a5a" stroke-width="0.8"/><path d="M28.2 27.5 L31.6 30.0 M31.6 27.5 L28.2 30.0" stroke="#5a5a5a" stroke-width="0.8"/>
<path d="M22.8 34.8 C22.8 39.2 13.6 35.8 10.7 42.4" fill="none" stroke="#5a5a5a" stroke-width="1"/>
<rect x="6.9" y="42.7" width="23.9" height="11.699999999999996" rx="1.6" fill="#fff" stroke="#5a5a5a" stroke-width="1.2"/>
<rect x="7.9" y="43.7" width="21.9" height="9.699999999999996" rx="1" fill="none" stroke="#b0b0b0" stroke-width="0.6"/>
<path d="M10.7 45.5 L13.6 48.4 M13.6 45.5 L10.7 48.4" stroke="#5a5a5a" stroke-width="0.8"/><path d="M14.4 45.5 L17.4 48.4 M17.4 45.5 L14.4 48.4" stroke="#5a5a5a" stroke-width="0.8"/><path d="M18.2 45.5 L21.1 48.4 M21.1 45.5 L18.2 48.4" stroke="#5a5a5a" stroke-width="0.8"/><path d="M22.0 45.5 L24.9 48.4 M24.9 45.5 L22.0 48.4" stroke="#5a5a5a" stroke-width="0.8"/><path d="M25.3 45.5 L28.2 48.4 M28.2 45.5 L25.3 48.4" stroke="#5a5a5a" stroke-width="0.8"/>
<path d="M14.0 49.9 H23.6 M13.6 51.6 H24.1" stroke="#5a5a5a" stroke-width="0.9"/>
</svg></div>
 <div class="lbl" style="top:254px;left:1px;font-weight:normal;color:#555">运单录入</div>
</div>

<div class="hd" style="left:928px;top:244px;width:200px">运货</div>
<div class="bd" style="left:928px;top:270px;width:200px;height:800px">
 <div class="big" style="left:73px;top:8px;width:54px;height:40px"><svg width="54" height="40" viewBox="0 0 54 40">
<rect x="23.5" y="8.7" width="7.0" height="26.099999999999998" fill="#b8b8ba" stroke="#2c2c31" stroke-width="0.8"/>
<path d="M23.9 9.5 L30.0 15.3 M30.0 9.5 L23.9 15.3" stroke="#2c2c31" stroke-width="1"/><circle cx="27.0" cy="12.4" r="1.5" fill="#d8d8d8"/><path d="M23.9 15.7 L30.0 21.6 M30.0 15.7 L23.9 21.6" stroke="#2c2c31" stroke-width="1"/><circle cx="27.0" cy="18.6" r="1.5" fill="#d8d8d8"/><path d="M23.9 22.0 L30.0 27.8 M30.0 22.0 L23.9 27.8" stroke="#2c2c31" stroke-width="1"/><circle cx="27.0" cy="24.8" r="1.5" fill="#d8d8d8"/><path d="M23.9 28.2 L30.0 34.0 M30.0 28.2 L23.9 34.0" stroke="#2c2c31" stroke-width="1"/><circle cx="27.0" cy="31.1" r="1.5" fill="#d8d8d8"/>
<path d="M17.2 1.7 L42.9 1.7 L49.0 8.7 L17.2 8.7 Z" fill="#b8b8ba" stroke="#2c2c31" stroke-width="0.9" stroke-linejoin="round"/>
<path d="M18.0 2.3 L24.1 8.2 M24.1 2.3 L18.0 8.2" stroke="#2c2c31" stroke-width="1"/><circle cx="21.1" cy="5.2" r="1.5" fill="#d8d8d8"/><path d="M24.2 2.3 L30.3 8.2 M30.3 2.3 L24.2 8.2" stroke="#2c2c31" stroke-width="1"/><circle cx="27.3" cy="5.2" r="1.5" fill="#d8d8d8"/><path d="M30.5 2.3 L36.5 8.2 M36.5 2.3 L30.5 8.2" stroke="#2c2c31" stroke-width="1"/><circle cx="33.5" cy="5.2" r="1.5" fill="#d8d8d8"/><path d="M36.7 2.3 L42.8 8.2 M42.8 2.3 L36.7 8.2" stroke="#2c2c31" stroke-width="1"/><circle cx="39.7" cy="5.2" r="1.5" fill="#d8d8d8"/>
<path d="M42.9 1.7 L49.0 8.7 L42.9 8.7 Z" fill="#2c2c31"/>
<path d="M43.3 8.7 V16.1" stroke="#2c2c31" stroke-width="0.8"/>
<path d="M38.2 22.2 L43.3 16.7 L48.4 22.2" fill="none" stroke="#2c2c31" stroke-width="0.9"/>
<rect x="34.0" y="22.0" width="18.299999999999997" height="10.899999999999999" rx="0.6" fill="#77777b"/>
<path d="M35.9 22.5 V32.5" stroke="#3c3c40" stroke-width="0.5"/><path d="M37.9 22.5 V32.5" stroke="#3c3c40" stroke-width="0.5"/><path d="M40.0 22.5 V32.5" stroke="#3c3c40" stroke-width="0.5"/><path d="M42.0 22.5 V32.5" stroke="#3c3c40" stroke-width="0.5"/><path d="M44.0 22.5 V32.5" stroke="#3c3c40" stroke-width="0.5"/><path d="M46.0 22.5 V32.5" stroke="#3c3c40" stroke-width="0.5"/><path d="M48.1 22.5 V32.5" stroke="#3c3c40" stroke-width="0.5"/><path d="M50.1 22.5 V32.5" stroke="#3c3c40" stroke-width="0.5"/><path d="M52.1 22.5 V32.5" stroke="#3c3c40" stroke-width="0.5"/>
<rect x="34.0" y="22.0" width="18.299999999999997" height="1" fill="#3c3c40"/><rect x="34.0" y="31.8" width="18.299999999999997" height="1" fill="#3c3c40"/>
<rect x="4.0" y="25.5" width="17.5" height="9.100000000000001" rx="0.6" fill="#77777b"/>
<path d="M5.6 26.1 V34.4" stroke="#3c3c40" stroke-width="0.5"/><path d="M7.6 26.1 V34.4" stroke="#3c3c40" stroke-width="0.5"/><path d="M9.6 26.1 V34.4" stroke="#3c3c40" stroke-width="0.5"/><path d="M11.6 26.1 V34.4" stroke="#3c3c40" stroke-width="0.5"/><path d="M13.7 26.1 V34.4" stroke="#3c3c40" stroke-width="0.5"/><path d="M15.7 26.1 V34.4" stroke="#3c3c40" stroke-width="0.5"/><path d="M17.7 26.1 V34.4" stroke="#3c3c40" stroke-width="0.5"/><path d="M19.7 26.1 V34.4" stroke="#3c3c40" stroke-width="0.5"/>
<rect x="8.3" y="21.2" width="8.2" height="4.400000000000002" rx="0.6" fill="#8a8a8e"/>
<rect x="4.0" y="25.5" width="17.5" height="1" fill="#55555a"/>
<rect x="12.0" y="21.2" width="1" height="13.400000000000002" fill="#c8c8c8"/>
<rect x="0.9" y="34.4" width="45.300000000000004" height="3.200000000000003" rx="1.5" fill="#2c2c31"/>
</svg></div>
 <div class="lbl" style="top:58px">发站装车</div>
 <div class="big" style="left:71px;top:106px;width:56px;height:42px"><svg width="56" height="42" viewBox="0 0 56 42">
<path d="M3.4 24.7 L9.7 11.8 L25.3 11.8 L25.3 24.7" fill="#fff" stroke="#37373c" stroke-width="1.6" stroke-linejoin="round"/>
<path d="M11.8 11.8 V24.7" stroke="#37373c" stroke-width="1.6"/>
<path d="M8.7 12.4 L10.7 11.5 L11.5 12.4Z" fill="#37373c"/>
<rect x="27.4" y="2.1" width="22.700000000000003" height="21.4" fill="#37373c"/>
<path d="M27.4 6.8 H50.1" stroke="#e8e8e8" stroke-width="0.8"/><path d="M27.4 3.8 H50.1" stroke="#77777b" stroke-width="0.5"/>
<path d="M38.7 2.1 V23.5" stroke="#e8e8e8" stroke-width="0.9"/>
<path d="M2.5 24.3 H52.7 V33.1 H53.5 Q54.3 33.2 54.0 34.4 L52.7 35.4 H2.5 V35.7 H1.5 V32.1 H2.5Z" fill="#37373c"/>
<circle cx="12.4" cy="35.7" r="4.6" fill="#fff"/><circle cx="12.4" cy="35.7" r="3.6" fill="#37373c"/>
<circle cx="39.5" cy="35.7" r="4.6" fill="#fff"/><circle cx="39.5" cy="35.7" r="3.6" fill="#37373c"/>
</svg></div>
 <div class="lbl" style="top:156px">发站外包</div>
 <div class="big" style="left:71px;top:190px;width:58px;height:60px"><svg width="58" height="60" viewBox="0 0 58 60">
<path d="M51.3 21.1 A24.7 24.7 0 1 1 38.3 8.1" fill="none" stroke="#38383d" stroke-width="4.3"/>
<path d="M42.4 3.2 L45.6 15.5 L32.5 14.7 Z" fill="#38383d"/>
<path d="M28.6 8.8 L28.6 13.3 M50.6 30.8 L46.1 30.8 M28.6 52.8 L28.6 48.3 M6.6 30.8 L11.1 30.8" stroke="#38383d" stroke-width="1.5"/>
<text x="28.6" y="36.5" text-anchor="middle" font-family="'Liberation Sans',sans-serif" font-size="17" fill="#38383d" stroke="#38383d" stroke-width="0.55">24</text>
</svg></div>
 <div class="lbl" style="top:252px">到站点到</div>
</div>
</body>
</html>
